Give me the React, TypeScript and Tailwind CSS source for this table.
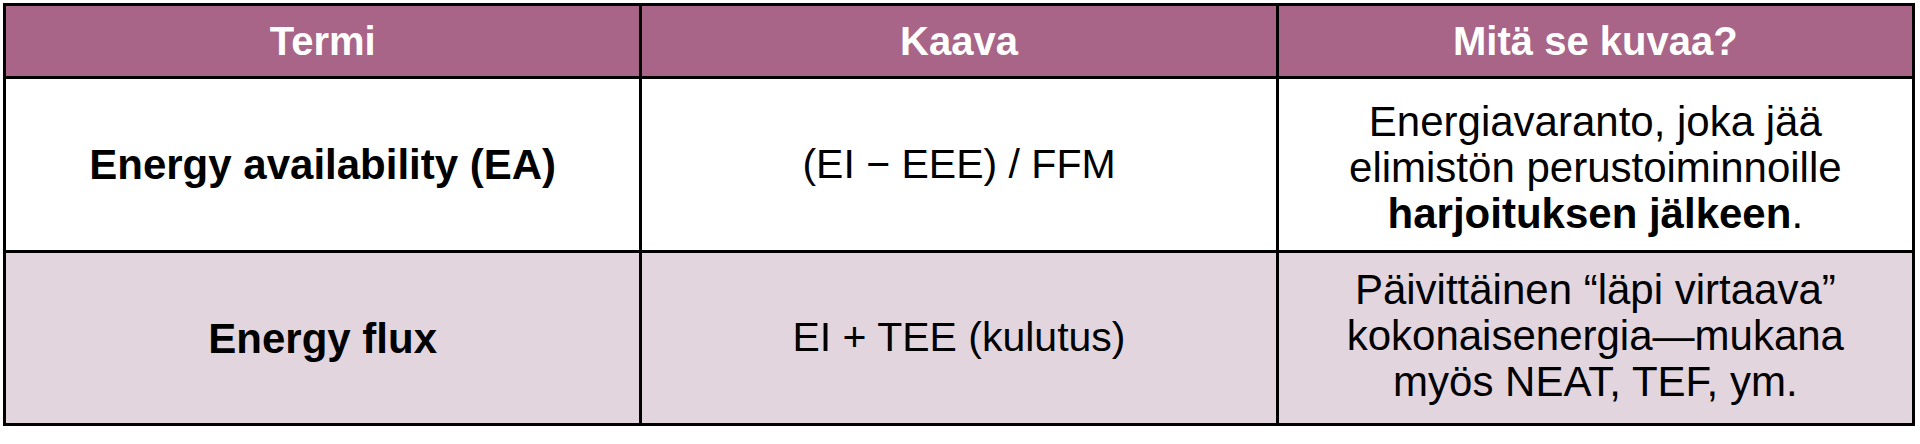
import React from "react";

const font = { fontFamily: '"Liberation Sans", Arial, Helvetica, sans-serif' };

const rows = [
  {
    term: "Energy availability (EA)",
    formula: "(EI − EEE) / FFM",
    bg: "bg-white",
    pad: "pt-[7px]",
    desc: (
      <>
        Energiavaranto, joka jää
        <br />
        elimistön perustoiminnoille
        <br />
        <span className="font-bold">harjoituksen jälkeen</span>.
      </>
    ),
  },
  {
    term: "Energy flux",
    formula: "EI + TEE (kulutus)",
    bg: "bg-[#e2d5de]",
    pad: "pb-[5px]",
    desc: (
      <>
        Päivittäinen “läpi virtaava”
        <br />
        kokonaisenergia—mukana
        <br />
        myös NEAT, TEF, ym.
      </>
    ),
  },
];

export default function App() {
  return (
    <div className="w-[1920px] h-[444px] bg-white pl-[3px] pt-[3px]" style={font}>
      <div className="w-[1912px] bg-black p-[3px] grid grid-cols-3 grid-rows-[70px_171px_170px] gap-[3px]">
        {["Termi", "Kaava", "Mitä se kuvaa?"].map((h) => (
          <div
            key={h}
            className="bg-[#a86588] text-white font-bold text-[40px] leading-none flex items-center justify-center"
          >
            {h}
          </div>
        ))}
        {rows.map((r) => (
          <React.Fragment key={r.term}>
            <div className={`${r.bg} flex items-center justify-center font-bold text-[42px] text-black`}>
              {r.term}
            </div>
            <div className={`${r.bg} flex items-center justify-center text-[41px] text-black`}>
              {r.formula}
            </div>
            <div
              className={`${r.bg} ${r.pad} flex items-center justify-center text-center text-[42px] leading-[46px] text-black`}
            >
              <p>{r.desc}</p>
            </div>
          </React.Fragment>
        ))}
      </div>
    </div>
  );
}
